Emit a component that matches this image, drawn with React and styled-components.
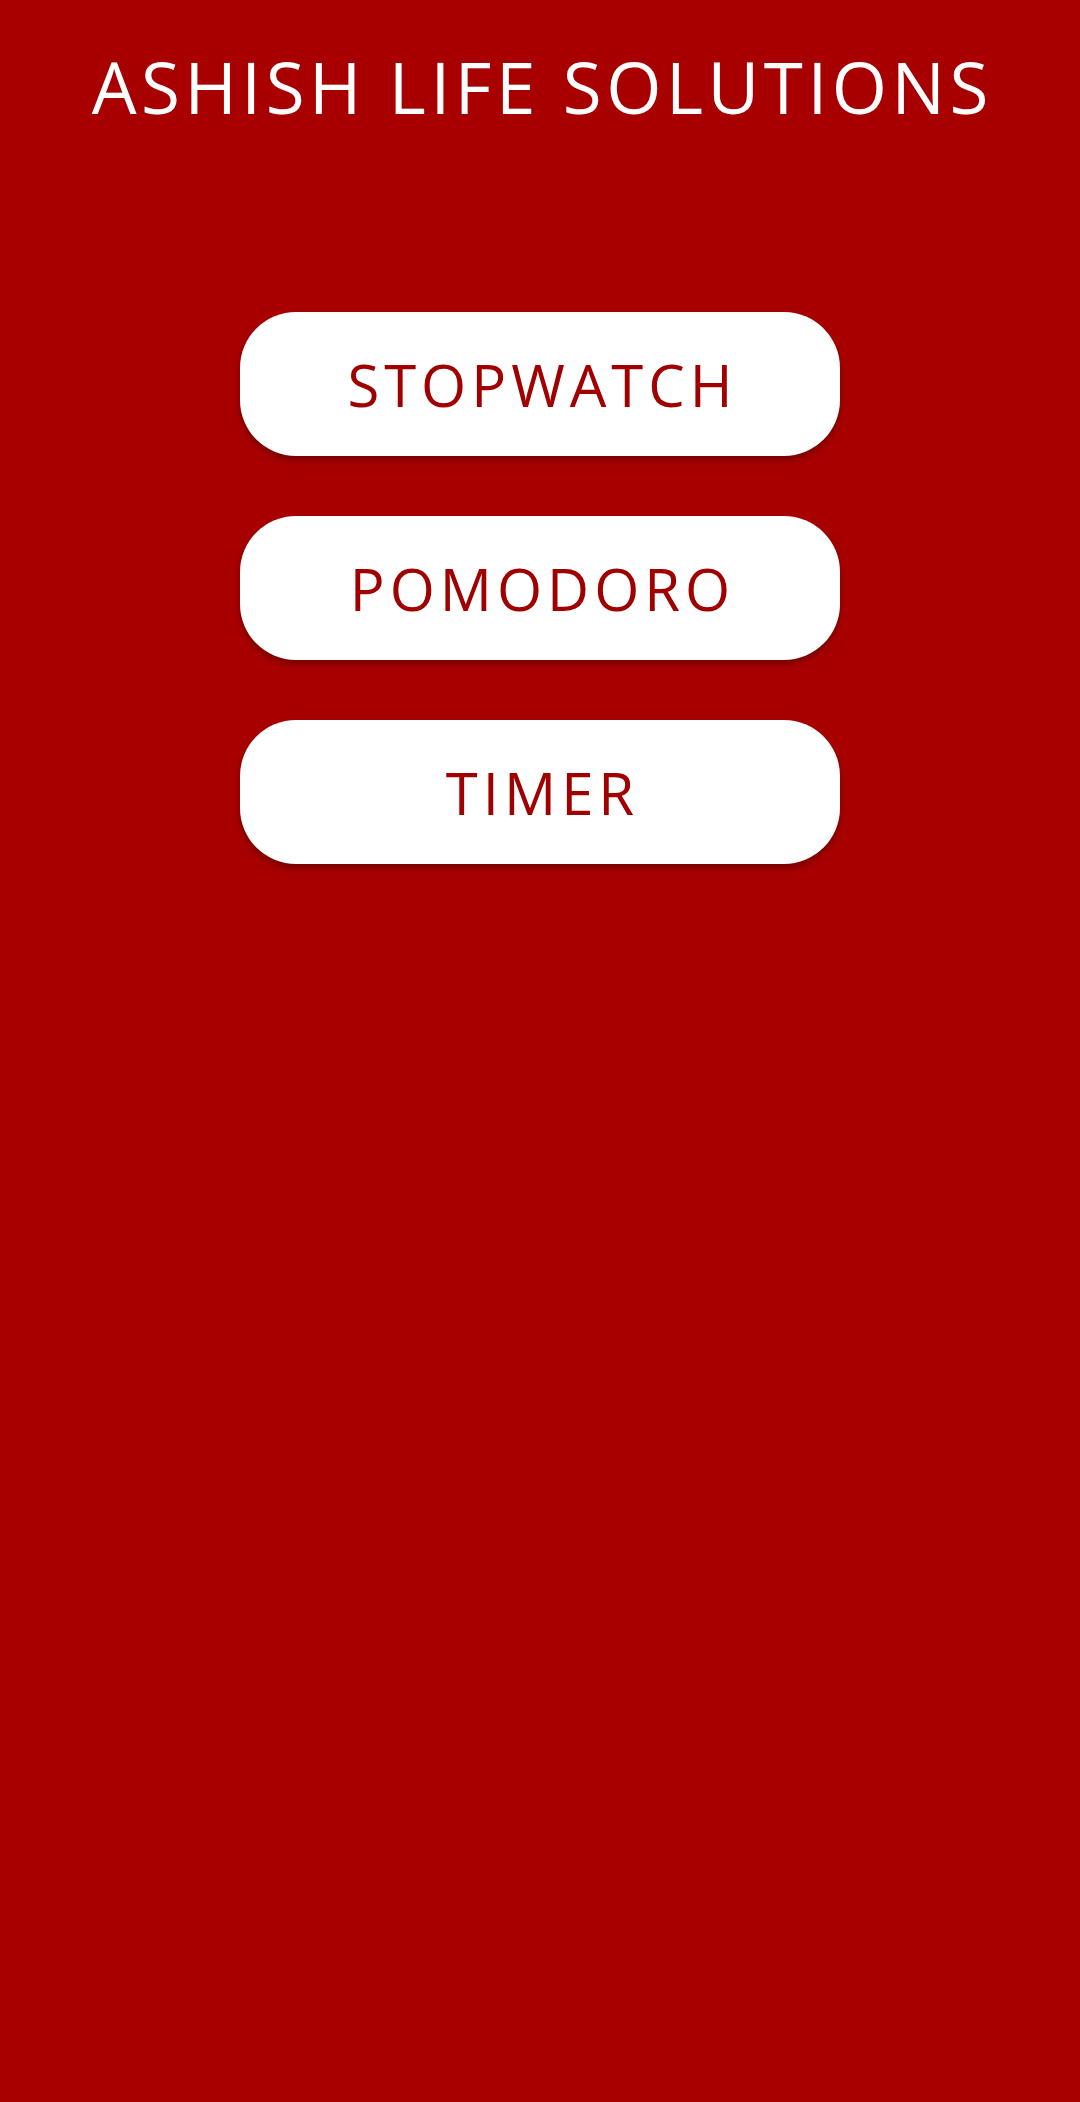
import React from 'react';
import styled, { createGlobalStyle } from 'styled-components';

const MENU = ['STOPWATCH', 'POMODORO', 'TIMER'];

const GlobalStyle = createGlobalStyle`
  html, body {
    margin: 0;
    padding: 0;
    background-color: #a80000;
  }
`;

const Page = styled.div`
  display: flex;
  flex-direction: column;
  align-items: center;
  min-height: 2102px;
  background-color: #a80000;
  font-family: "Open Sans", "DejaVu Sans", sans-serif;
`;

const Title = styled.h1`
  margin: 0;
  padding-top: 44px;
  padding-left: 4.5px;
  color: #ffffff;
  font-size: 71px;
  font-weight: 400;
  line-height: 1.2;
  letter-spacing: 4.5px;
  text-align: center;
`;

const Menu = styled.nav`
  display: flex;
  flex-direction: column;
  gap: 60px;
  margin-top: 183px;
`;

const MenuButton = styled.button`
  display: flex;
  justify-content: center;
  align-items: center;
  width: 600px;
  height: 144px;
  padding: 0 0 0 5px;
  border: none;
  border-radius: 56px;
  background-color: #ffffff;
  box-shadow: 0 4px 6px rgba(0, 0, 0, 0.3);
  color: #a00000;
  font-family: inherit;
  font-size: 58px;
  font-weight: 400;
  letter-spacing: 5px;
  cursor: pointer;
`;

export default function App() {
  return (
    <>
      <GlobalStyle />
      <Page>
        <Title>ASHISH LIFE SOLUTIONS</Title>
        <Menu>
          {MENU.map((label) => (
            <MenuButton key={label}>{label}</MenuButton>
          ))}
        </Menu>
      </Page>
    </>
  );
}
